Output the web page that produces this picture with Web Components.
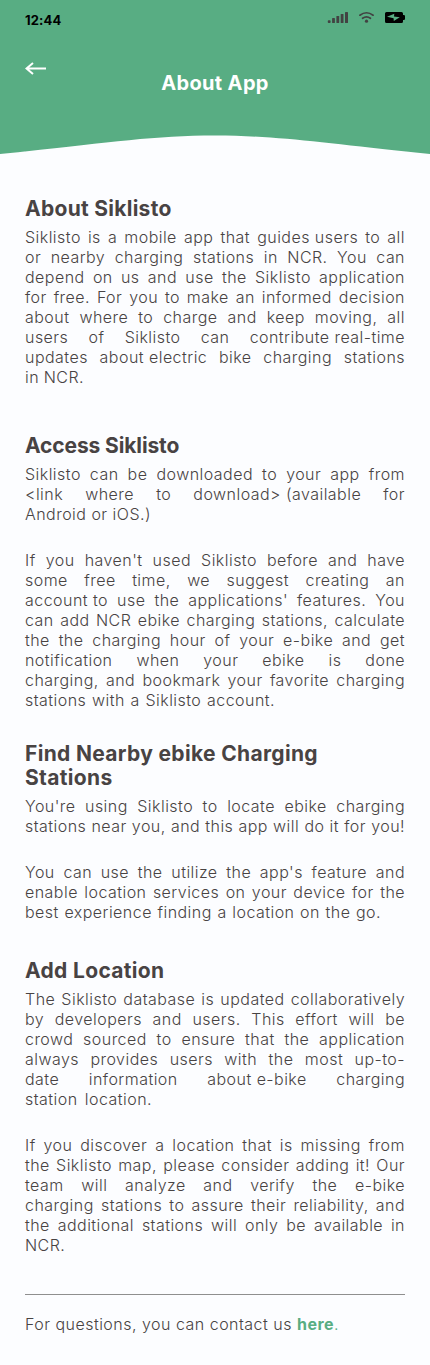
<!DOCTYPE html>
<html lang="en">
<head>
<meta charset="utf-8">
<title>About App</title>
<style>
body{margin:0;background:#fcfdff;font-family:Inter,"Open Sans",sans-serif;color:#484343}
</style>
</head>
<body>
<about-page></about-page>
<script>
const define=(name,html)=>{
  const t=document.createElement('template');
  t.innerHTML=html;
  customElements.define(name,class extends HTMLElement{
    constructor(){super();this.attachShadow({mode:'open'}).append(t.content.cloneNode(true));}
  });
};

define('status-bar',`
<style>
:host{display:flex;justify-content:space-between;padding:12px 25px 0;color:#000;height:16px}
.time{font:700 13px/16px Inter,sans-serif;letter-spacing:.15px}
.icons{display:flex;margin-top:-1px}
svg{display:block}
</style>
<span class="time">12:44</span>
<div class="icons">
<svg width="78" height="13" viewBox="0 0 78 13">
<g fill="#424242"><rect x=".8" y="9.2" width="2.8" height="2.8" rx=".8"/><rect x="5.1" y="7" width="2.8" height="5" rx=".6"/><rect x="9.4" y="5" width="2.8" height="7" rx=".6"/><rect x="13.7" y="3" width="2.8" height="9" rx=".6"/><rect x="18" y="1" width="3" height="11" rx=".6"/><circle cx="39.5" cy="10.2" r="1.6"/></g>
<g fill="none" stroke="#424242" stroke-width="1.7" stroke-linecap="round"><path d="M32.9 4.2Q39.5-.7 46.1 4.2M35.6 7.3Q39.5 4.4 43.4 7.3"/></g>
<path fill="#000" d="M59.5 1h15a1.5 1.5 0 0 1 1.5 1.5V4h.8q1.2 0 1.2 1v3q0 1-1.2 1H76v1.5a1.5 1.5 0 0 1-1.5 1.5h-15a1.5 1.5 0 0 1-1.5-1.5v-8A1.5 1.5 0 0 1 59.5 1z"/>
<path fill="#58ad83" d="M60 5.8 67.3 2.8 67 5.5 72.8 6.3 66.8 9.9 66.6 7.2z"/>
</svg>
</div>`);

define('app-header',`
<style>
:host{display:block;height:154px;background:#58ad83;color:#fff;position:relative}
nav{padding:34px 25px 0;height:13px}
svg{display:block}
h1{margin:-5px 0 0;padding:1px 0 0;text-align:center;font:700 20px/25px Inter,sans-serif;letter-spacing:.35px}
.wave{position:absolute;left:0;bottom:0}
</style>
<status-bar></status-bar>
<nav><svg width="22" height="13" viewBox="0 0 22 13" fill="none" stroke="#fff" stroke-width="2"><path d="M1.2 6.5H21M8 1 1.5 6.5 8 12"/></svg></nav>
<h1>About App</h1>
<svg class="wave" width="430" height="19" viewBox="0 0 430 19"><path fill="#fcfdff" d="M0 19C100 9 150 .5 215 .5S330 9 430 19z"/></svg>`);

define('text-line',`
<style>:host{display:block;width:var(--w,380px);white-space:nowrap;text-align:justify;text-align-last:justify}</style><slot></slot>`);

define('keep-together',`
<style>:host{display:inline-block;text-align:left;text-align-last:left;word-spacing:0}</style><slot></slot>`);

define('text-paragraph',`
<style>:host{display:block;font-size:16px;line-height:20px;font-weight:300;letter-spacing:.46px;word-spacing:-2px}</style><slot></slot>`);

define('info-section',`
<style>
:host{display:flex;flex-direction:column;gap:26px}
.head{margin-bottom:-20px;font-size:21px;line-height:24px;font-weight:700;letter-spacing:var(--ls)}
</style>
<div class="head"><slot name="title"></slot></div><slot></slot>`);

define('page-footer',`
<style>
:host{display:block;margin-top:39px;border-top:1px solid #8f8f8f;padding-top:19px}
b{color:#58ad83;font-weight:700}i{color:#58ad83;font-style:normal}
</style>
<text-paragraph><text-line style="--w:314px">For questions, you can contact us <b>here</b><i>.</i></text-line></text-paragraph>`);

const section=(gap,ls,title,paras)=>`<info-section style="margin-top:${gap}px;--ls:${ls}px"><span slot="title">${title}</span>${
  paras.map(p=>`<text-paragraph>${p.map(l=>{
    const [txt,w]=Array.isArray(l)?l:[l];
    return `<text-line${w?` style="--w:${w}px"`:''}>${txt.replace(/\[(.+?)\]/g,'<keep-together>$1</keep-together>')}</text-line>`;
  }).join('')}</text-paragraph>`).join('')}</info-section>`;

define('about-page',`
<style>
:host{display:block;width:430px;height:1365px}
main{padding:43px 25px 0}
</style>
<app-header></app-header>
<main>`+
section(0,.28,'About Siklisto',[[
'Siklisto is a mobile app that [guides users] to all',
'or nearby charging stations in NCR. You can',
'depend on us and use the Siklisto application',
'for free. For you to make an informed decision',
'about where to charge and keep moving, all',
'users of Siklisto can [contribute real-time]',
'updates [about electric] bike charging stations',
['in NCR.',59]]])+
section(47,-.12,'Access Siklisto',[[
'Siklisto can be downloaded to your app from',
'&lt;link where to [download&gt; (available] for',
['Android or iOS.)',126]],[
"If you haven't used Siklisto before and have",
'some free time, we suggest creating an',
"[account to] use the applications' features. You",
'can add NCR ebike charging stations, calculate',
'the the charging hour of your e-bike and get',
'notification when your ebike is done',
'charging, and bookmark your favorite charging',
['stations with a Siklisto account.',250]]])+
section(32,.33,'Find Nearby ebike Charging<br>Stations',[[
"You're using Siklisto to locate ebike charging",
'stations near you, and this app will do it for you!'],[
"You can use the utilize the app's feature and",
'enable location services on your device for the',
['best experience finding a location on the go.',356]]])+
section(37,.33,'Add Location',[[
'The Siklisto database is updated collaboratively',
'by developers and users. This effort will be',
'crowd sourced to ensure that the application',
'always provides users with the most up-to-',
'date information [about e-bike] charging',
['station location.',127]],[
'If you discover a location that is missing from',
'the Siklisto map, please consider adding it! Our',
'team will analyze and verify the e-bike',
'charging stations to assure their reliability, and',
'the additional stations will only be available in',
['NCR.',39]]])+
`<page-footer></page-footer></main>`);
</script>
</body>
</html>
